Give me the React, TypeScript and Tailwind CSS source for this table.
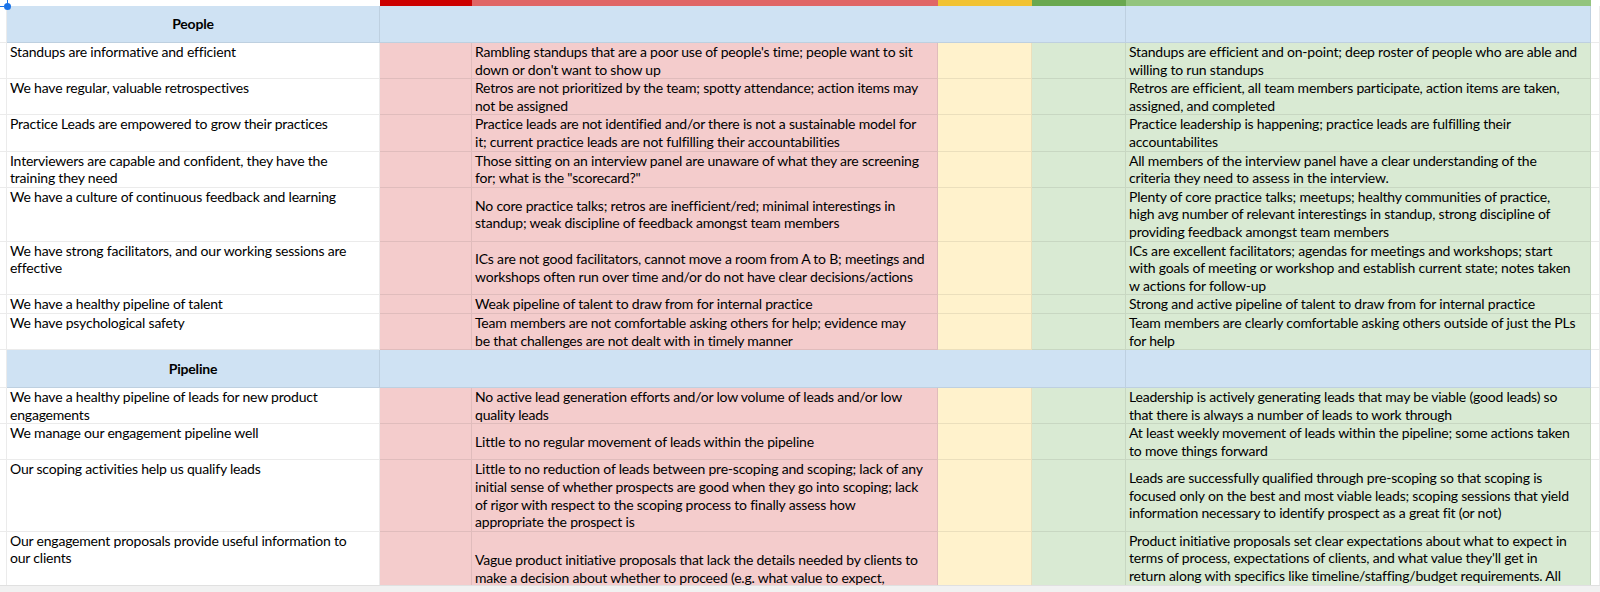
import { ReactNode } from "react";

type Item = {
  q: string[];
  bad: string[];
  good: string[];
  h?: string;
  goodTop?: boolean;
};

const people: Item[] = [
  {
    q: ["Standups are informative and efficient"],
    bad: ["Rambling standups that are a poor use of people's time; people want to sit", "down or don't want to show up"],
    good: ["Standups are efficient and on-point; deep roster of people who are able and", "willing to run standups"],
  },
  {
    q: ["We have regular, valuable retrospectives"],
    bad: ["Retros are not prioritized by the team; spotty attendance; action items may", "not be assigned"],
    good: ["Retros are efficient, all team members participate, action items are taken,", "assigned, and completed"],
  },
  {
    q: ["Practice Leads are empowered to grow their practices"],
    bad: [
      "Practice leads are not identified and/or there is not a sustainable model for",
      "it; current practice leads are not fulfilling their accountabilities",
    ],
    good: ["Practice leadership is happening; practice leads are fulfilling their", "accountabilites"],
  },
  {
    q: ["Interviewers are capable and confident, they have the", "training they need"],
    bad: ["Those sitting on an interview panel are unaware of what they are screening", 'for; what is the "scorecard?"'],
    good: ["All members of the interview panel have a clear understanding of the", "criteria they need to assess in the interview."],
  },
  {
    q: ["We have a culture of continuous feedback and learning"],
    bad: ["No core practice talks; retros are inefficient/red; minimal interestings in", "standup; weak discipline of feedback amongst team members"],
    good: [
      "Plenty of core practice talks; meetups; healthy communities of practice,",
      "high avg number of relevant interestings in standup, strong discipline of",
      "providing feedback amongst team members",
    ],
  },
  {
    q: ["We have strong facilitators, and our working sessions are", "effective"],
    bad: [
      "ICs are not good facilitators, cannot move a room from A to B; meetings and",
      "workshops often run over time and/or do not have clear decisions/actions",
    ],
    good: [
      "ICs are excellent facilitators; agendas for meetings and workshops; start",
      "with goals of meeting or workshop and establish current state; notes taken",
      "w actions for follow-up",
    ],
  },
  {
    q: ["We have a healthy pipeline of talent"],
    bad: ["Weak pipeline of talent to draw from for internal practice"],
    good: ["Strong and active pipeline of talent to draw from for internal practice"],
  },
  {
    q: ["We have psychological safety"],
    bad: ["Team members are not comfortable asking others for help; evidence may", "be that challenges are not dealt with in timely manner"],
    good: ["Team members are clearly comfortable asking others outside of just the PLs", "for help"],
  },
];

const pipeline: Item[] = [
  {
    q: ["We have a healthy pipeline of leads for new product", "engagements"],
    bad: ["No active lead generation efforts and/or low volume of leads and/or low", "quality leads"],
    good: ["Leadership is actively generating leads that may be viable (good leads) so", "that there is always a number of leads to work through"],
  },
  {
    q: ["We manage our engagement pipeline well"],
    bad: ["Little to no regular movement of leads within the pipeline"],
    good: ["At least weekly movement of leads within the pipeline; some actions taken", "to move things forward"],
  },
  {
    q: ["Our scoping activities help us qualify leads"],
    bad: [
      "Little to no reduction of leads between pre-scoping and scoping; lack of any",
      "initial sense of whether prospects are good when they go into scoping; lack",
      "of rigor with respect to the scoping process to finally assess how",
      "appropriate the prospect is",
    ],
    good: [
      "Leads are successfully qualified through pre-scoping so that scoping is",
      "focused only on the best and most viable leads; scoping sessions that yield",
      "information necessary to identify prospect as a great fit (or not)",
    ],
  },
  {
    q: ["Our engagement proposals provide useful information to", "our clients"],
    bad: [
      "Vague product initiative proposals that lack the details needed by clients to",
      "make a decision about whether to proceed (e.g. what value to expect,",
      "staffing and budget needs, etc)",
    ],
    good: [
      "Product initiative proposals set clear expectations about what to expect in",
      "terms of process, expectations of clients, and what value they'll get in",
      "return along with specifics like timeline/staffing/budget requirements. All",
    ],
    h: "h-[92px] shrink-0",
    goodTop: true,
  },
];

// sheet gridline, drawn on every cell
const cell = "border-b border-r border-black/[0.08] overflow-hidden";

function Lines({ lines }: { lines: string[] }) {
  return (
    <>
      {lines.map((l, i) => (
        <div key={i} className="whitespace-nowrap">
          {l}
        </div>
      ))}
    </>
  );
}

function Row({ item }: { item: Item }) {
  return (
    <div className={`grid shrink-0 grid-cols-[7px_373px_92px_466px_94px_94px_465px_9px] ${item.h ?? ""}`}>
      <div className={`${cell} bg-white`} />
      <div className={`${cell} bg-white px-[3px]`}>
        <Lines lines={item.q} />
      </div>
      <div className={`${cell} bg-[#f4cccc]`} />
      <div className={`${cell} flex flex-col justify-center bg-[#f4cccc] px-[3px]`}>
        <Lines lines={item.bad} />
      </div>
      <div className={`${cell} bg-[#fff2cc]`} />
      <div className={`${cell} bg-[#d9ead3]`} />
      <div className={`${cell} flex flex-col bg-[#d9ead3] px-[3px] ${item.goodTop ? "justify-start" : "justify-center"}`}>
        <Lines lines={item.good} />
      </div>
      <div className={`${cell} bg-white`} />
    </div>
  );
}

function Section({ title, h, children }: { title: string; h: string; children: ReactNode }) {
  return (
    <>
      <div className={`grid shrink-0 grid-cols-[7px_373px_746px_465px_9px] ${h}`}>
        <div className={`${cell} bg-white`} />
        <div className={`${cell} flex items-center justify-center bg-[#cfe2f3] font-bold`}>{title}</div>
        <div className={`${cell} bg-[#cfe2f3]`} />
        <div className={`${cell} bg-[#cfe2f3]`} />
        <div className={`${cell} bg-white`} />
      </div>
      {children}
    </>
  );
}

export default function App() {
  return (
    <div className="relative flex h-[592px] w-[1600px] flex-col overflow-hidden bg-white font-['Lato','Liberation_Sans',sans-serif] text-[14px] leading-[17.6px] tracking-[-0.2px] text-black">
      <div className="flex h-[585px] flex-col overflow-hidden">
        {/* tail of the colour-key row above */}
        <div className="grid h-[6px] shrink-0 grid-cols-[380px_92px_466px_94px_94px_465px_9px]">
          <div className="bg-white" />
          <div className="bg-[#cc0000]" />
          <div className="bg-[#e06666]" />
          <div className="bg-[#f1c232]" />
          <div className="bg-[#6aa84f]" />
          <div className="bg-[#93c47d]" />
          <div className="bg-white" />
        </div>

        <Section title="People" h="h-[37px]">
          {people.map((item, i) => (
            <Row key={i} item={item} />
          ))}
        </Section>

        <Section title="Pipeline" h="h-[38px]">
          {pipeline.map((item, i) => (
            <Row key={i} item={item} />
          ))}
        </Section>
      </div>
      <div className="h-[7px] border-t border-[#e0e0e0] bg-[#f1f1f1]" />

      {/* selection handle */}
      <div className="absolute left-[7px] top-0 h-[4px] border-l border-dashed border-[#1a73e8]" />
      <div className="absolute left-0 top-[6px] w-[4px] border-t border-dashed border-[#1a73e8]" />
      <div className="absolute left-[4px] top-[3px] h-[7px] w-[7px] rounded-full bg-[#1a73e8]" />
    </div>
  );
}
